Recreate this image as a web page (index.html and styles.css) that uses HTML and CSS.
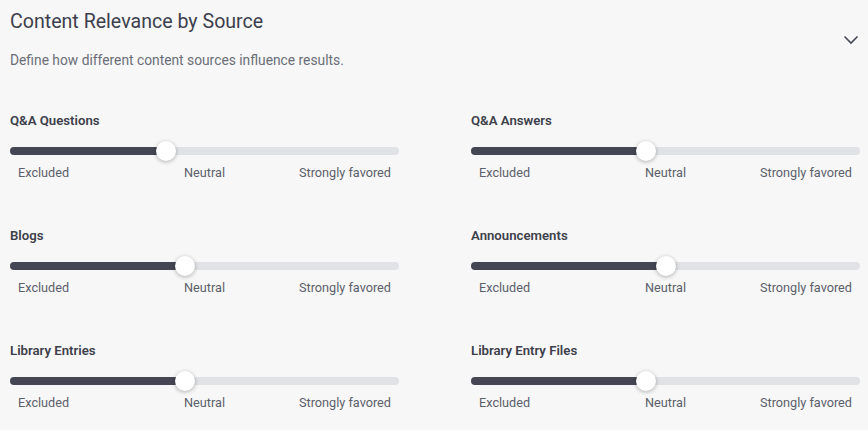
FILE: index.html
```html
<!DOCTYPE html>
<html lang="en">

<head>
    <meta charset="UTF-8">
    <meta name="viewport" content="width=device-width, initial-scale=1.0">
    <title>Content Relevance by Source</title>
    <link rel="stylesheet" href="styles.css">
</head>

<body>
    <div class="panel">
        <div class="header">
            <div class="header-text">
                <h2>Content Relevance by Source</h2>
                <p>Define how different content sources influence results.</p>
            </div>
            <svg class="chevron" width="16" height="16" viewBox="0 0 16 16">
                <path d="M1.5 4.5 L8 11 L14.5 4.5" fill="none" stroke="#444855" stroke-width="1.6" />
            </svg>
        </div>

        <div class="sources">
            <div class="source">
                <div class="source-label">Q&amp;A Questions</div>
                <div class="track">
                    <div class="fill" style="width: 40%;"></div>
                    <div class="thumb" style="left: 40%;"></div>
                </div>
                <div class="scale">
                    <span>Excluded</span>
                    <span>Neutral</span>
                    <span>Strongly favored</span>
                </div>
            </div>

            <div class="source">
                <div class="source-label">Q&amp;A Answers</div>
                <div class="track">
                    <div class="fill" style="width: 45%;"></div>
                    <div class="thumb" style="left: 45%;"></div>
                </div>
                <div class="scale">
                    <span>Excluded</span>
                    <span>Neutral</span>
                    <span>Strongly favored</span>
                </div>
            </div>

            <div class="source">
                <div class="source-label">Blogs</div>
                <div class="track">
                    <div class="fill" style="width: 45%;"></div>
                    <div class="thumb" style="left: 45%;"></div>
                </div>
                <div class="scale">
                    <span>Excluded</span>
                    <span>Neutral</span>
                    <span>Strongly favored</span>
                </div>
            </div>

            <div class="source">
                <div class="source-label">Announcements</div>
                <div class="track">
                    <div class="fill" style="width: 50%;"></div>
                    <div class="thumb" style="left: 50%;"></div>
                </div>
                <div class="scale">
                    <span>Excluded</span>
                    <span>Neutral</span>
                    <span>Strongly favored</span>
                </div>
            </div>

            <div class="source">
                <div class="source-label">Library Entries</div>
                <div class="track">
                    <div class="fill" style="width: 45%;"></div>
                    <div class="thumb" style="left: 45%;"></div>
                </div>
                <div class="scale">
                    <span>Excluded</span>
                    <span>Neutral</span>
                    <span>Strongly favored</span>
                </div>
            </div>

            <div class="source">
                <div class="source-label">Library Entry Files</div>
                <div class="track">
                    <div class="fill" style="width: 45%;"></div>
                    <div class="thumb" style="left: 45%;"></div>
                </div>
                <div class="scale">
                    <span>Excluded</span>
                    <span>Neutral</span>
                    <span>Strongly favored</span>
                </div>
            </div>
        </div>
    </div>
</body>

</html>
```

FILE: styles.css
```css
body {
    margin: 0;
    background-color: #f7f7f7;
    font-family: Roboto, "Liberation Sans", sans-serif;
    color: #3d404b;
}

.panel {
    padding: 10px 8px 0 10px;
}

.header {
    display: flex;
    align-items: center;
    justify-content: space-between;
}

.header h2 {
    margin: 0;
    font-size: 19.6px;
    line-height: 24px;
    font-weight: 400;
    color: #3c404c;
}

.header p {
    margin: 17px 0 0;
    font-size: 13.8px;
    line-height: 18px;
    color: #6b6e78;
}

.chevron {
    display: block;
    margin-right: 1px;
}

.sources {
    display: grid;
    grid-template-columns: 1fr 1fr;
    column-gap: 72px;
    row-gap: 46px;
    margin-top: 43px;
}

.source-label {
    font-size: 13.2px;
    line-height: 18px;
    font-weight: 600;
    color: #3d404b;
}

.track {
    position: relative;
    height: 8px;
    margin-top: 17px;
    border-radius: 4px;
    background-color: #e0e2e6;
}

.fill {
    height: 100%;
    border-radius: 4px;
    background-color: #444753;
}

.thumb {
    position: absolute;
    top: 50%;
    width: 20px;
    height: 20px;
    margin: -10px 0 0 -10px;
    border-radius: 50%;
    background: white;
    box-shadow: 0 1px 4px rgba(0, 0, 0, 0.3);
}

.scale {
    display: grid;
    grid-template-columns: 1fr auto 1fr;
    padding: 0 8px;
    margin-top: 10px;
    font-size: 12.7px;
    line-height: 16px;
    color: #5c606b;
}

.scale span:last-child {
    text-align: right;
}
```
